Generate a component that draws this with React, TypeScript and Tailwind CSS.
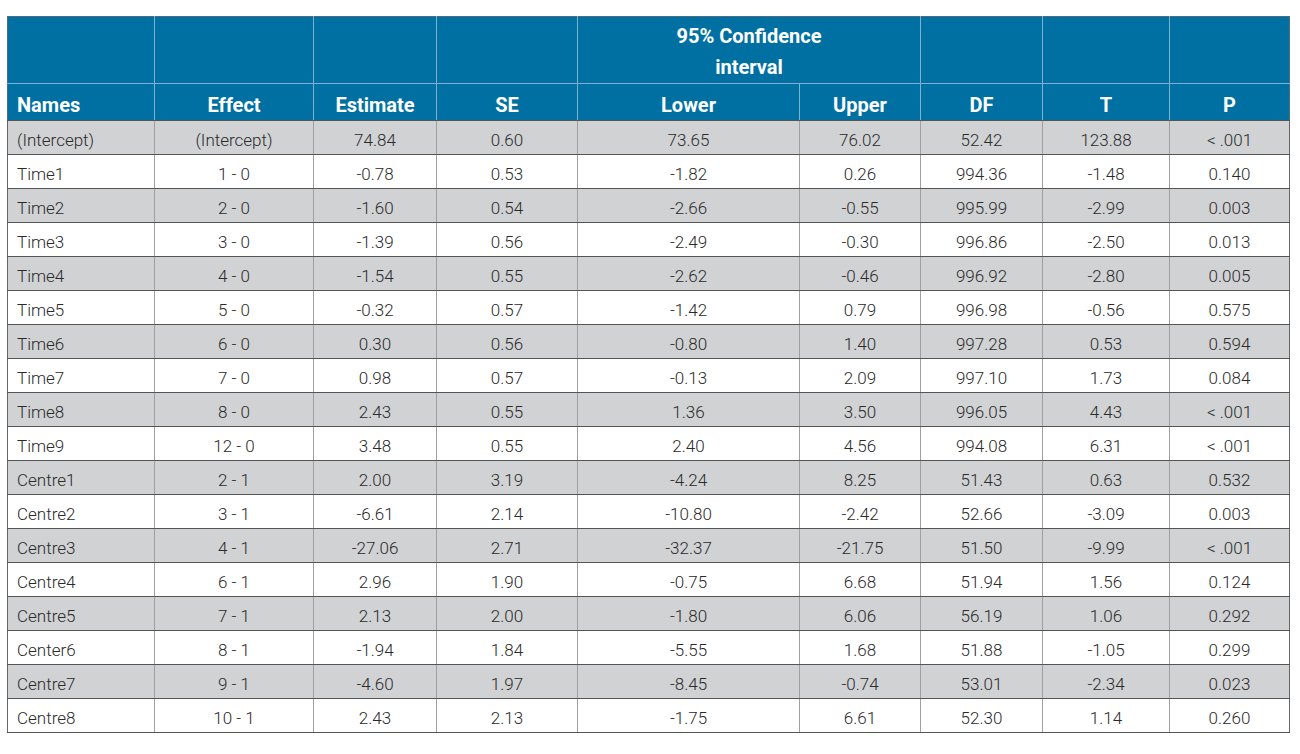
const ROWS: string[][] = [
  ['(Intercept)', '(Intercept)', '74.84', '0.60', '73.65', '76.02', '52.42', '123.88', '<.001'],
  ['Time1', '1 - 0', '-0.78', '0.53', '-1.82', '0.26', '994.36', '-1.48', '0.140'],
  ['Time2', '2 - 0', '-1.60', '0.54', '-2.66', '-0.55', '995.99', '-2.99', '0.003'],
  ['Time3', '3 - 0', '-1.39', '0.56', '-2.49', '-0.30', '996.86', '-2.50', '0.013'],
  ['Time4', '4 - 0', '-1.54', '0.55', '-2.62', '-0.46', '996.92', '-2.80', '0.005'],
  ['Time5', '5 - 0', '-0.32', '0.57', '-1.42', '0.79', '996.98', '-0.56', '0.575'],
  ['Time6', '6 - 0', '0.30', '0.56', '-0.80', '1.40', '997.28', '0.53', '0.594'],
  ['Time7', '7 - 0', '0.98', '0.57', '-0.13', '2.09', '997.10', '1.73', '0.084'],
  ['Time8', '8 - 0', '2.43', '0.55', '1.36', '3.50', '996.05', '4.43', '<.001'],
  ['Time9', '12 - 0', '3.48', '0.55', '2.40', '4.56', '994.08', '6.31', '<.001'],
  ['Centre1', '2 - 1', '2.00', '3.19', '-4.24', '8.25', '51.43', '0.63', '0.532'],
  ['Centre2', '3 - 1', '-6.61', '2.14', '-10.80', '-2.42', '52.66', '-3.09', '0.003'],
  ['Centre3', '4 - 1', '-27.06', '2.71', '-32.37', '-21.75', '51.50', '-9.99', '<.001'],
  ['Centre4', '6 - 1', '2.96', '1.90', '-0.75', '6.68', '51.94', '1.56', '0.124'],
  ['Centre5', '7 - 1', '2.13', '2.00', '-1.80', '6.06', '56.19', '1.06', '0.292'],
  ['Center6', '8 - 1', '-1.94', '1.84', '-5.55', '1.68', '51.88', '-1.05', '0.299'],
  ['Centre7', '9 - 1', '-4.60', '1.97', '-8.45', '-0.74', '53.01', '-2.34', '0.023'],
  ['Centre8', '10 - 1', '2.43', '2.13', '-1.75', '6.61', '52.30', '1.14', '0.260'],
];

const WIDTHS = [147, 159, 123, 141, 222, 121, 122, 127, 120];
const HEADS = ['Names', 'Effect', 'Estimate', 'SE', 'Lower', 'Upper', 'DF', 'T', 'P'];

const th = 'border border-[#7fb2d2] text-white font-bold text-[20px] p-0';

export default function App() {
  return (
    <div className="w-[1300px] h-[754px] bg-white pt-4 pl-[7px]" style={{ fontFamily: 'Roboto, "Liberation Sans", sans-serif' }}>
      <table className="table-fixed border-collapse w-[1282px]">
        <colgroup>
          {WIDTHS.map((w, i) => <col key={i} style={{ width: w }} />)}
        </colgroup>
        <thead className="bg-[#0070a3]">
          <tr className="h-[67px]">
            <th className={th + ' border-t-[#4f6b80] border-l-[#4f6b80]'} />
            <th className={th + ' border-t-[#4f6b80]'} />
            <th className={th + ' border-t-[#4f6b80]'} />
            <th className={th + ' border-t-[#4f6b80]'} />
            <th colSpan={2} className={th + ' border-t-[#4f6b80] leading-[31px] pt-[4px]'}>95% Confidence<br />interval</th>
            <th className={th + ' border-t-[#4f6b80]'} />
            <th className={th + ' border-t-[#4f6b80]'} />
            <th className={th + ' border-t-[#4f6b80] border-r-[#4f6b80]'} />
          </tr>
          <tr className="h-[37px]">
            {HEADS.map((h, i) => (
              <th
                key={h}
                className={
                  th + ' pt-[5px] leading-[26px] ' +
                  (i === 0 ? 'text-left pl-[9px] border-l-[#4f6b80]' : 'text-center') +
                  (i === 8 ? ' border-r-[#4f6b80]' : '') +
                  ' border-b-[#555]'
                }
              >
                {h}
              </th>
            ))}
          </tr>
        </thead>
        <tbody>
          {ROWS.map((r, ri) => (
            <tr key={ri} className={'h-[34px] ' + (ri % 2 === 0 ? 'bg-[#d1d2d4]' : 'bg-white')}>
              {r.map((c, ci) => (
                <td
                  key={ci}
                  className={
                    'p-0 pt-[4px] leading-[24px] font-light text-[17px] text-[#2a2a2a] border-b border-b-[#555] border-r ' +
                    (ci === 8 ? 'border-r-[#666] ' : 'border-r-[#a0a0a0] ') +
                    (ci === 0 ? 'text-left pl-[9px] border-l border-l-[#666]' : 'text-center')
                  }
                >
                  {c === '<.001' ? '< .001' : c}
                </td>
              ))}
            </tr>
          ))}
        </tbody>
      </table>
    </div>
  );
}
